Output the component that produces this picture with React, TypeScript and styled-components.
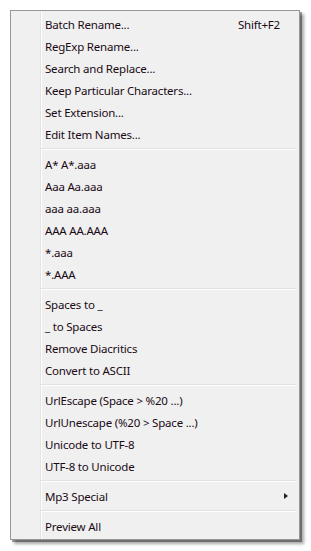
import React from "react";
import styled, { createGlobalStyle } from "styled-components";

const Global = createGlobalStyle`
  html, body { margin: 0; padding: 0; background: #ffffff; }
  body { font-family: "Noto Sans", "Open Sans", sans-serif; }
`;

const Page = styled.div`
  padding: 10px 0 0 10px;
  width: 311px;
  height: 551px;
  box-sizing: border-box;
`;

const Menu = styled.div`
  width: 290px;
  box-sizing: border-box;
  border: 1px solid #979797;
  padding: 2px;
  display: flex;
  flex-direction: column;
  background:
    linear-gradient(
      to right,
      transparent 29px,
      #e2e3e3 29px,
      #e2e3e3 30px,
      #ffffff 30px,
      #ffffff 31px,
      transparent 31px
    ),
    #f0f0f0;
  box-shadow: 2px 2px 0 rgba(0, 0, 0, 0.35), 4px 4px 3px rgba(0, 0, 0, 0.35);
`;

const Item = styled.div<{ $sub?: boolean }>`
  height: 22px;
  display: flex;
  align-items: center;
  padding: 0 ${(p) => (p.$sub ? "9px" : "17px")} 0 32px;
  font-size: 11.5px;
  letter-spacing: -0.2px;
  color: #1a0a14;
  white-space: nowrap;
`;

const Label = styled.span`
  flex: 1;
`;

const Shortcut = styled.span`
  color: #1a0a14;
`;

const Arrow = styled.span`
  width: 0;
  height: 0;
  border-top: 3.5px solid transparent;
  border-bottom: 3.5px solid transparent;
  border-left: 4px solid #222;
`;

const Separator = styled.div`
  height: 8px;
  margin: 0 0 0 28px;
  display: flex;
  flex-direction: column;
  justify-content: center;
  &::before {
    content: "";
    display: block;
    height: 1px;
    background: #e0e0e0;
  }
  &::after {
    content: "";
    display: block;
    height: 1px;
    background: #ffffff;
  }
`;

type Entry =
  | { label: string; shortcut?: string; sub?: boolean }
  | "sep";

const entries: Entry[] = [
  { label: "Batch Rename...", shortcut: "Shift+F2" },
  { label: "RegExp Rename..." },
  { label: "Search and Replace..." },
  { label: "Keep Particular Characters..." },
  { label: "Set Extension..." },
  { label: "Edit Item Names..." },
  "sep",
  { label: "A* A*.aaa" },
  { label: "Aaa Aa.aaa" },
  { label: "aaa aa.aaa" },
  { label: "AAA AA.AAA" },
  { label: "*.aaa" },
  { label: "*.AAA" },
  "sep",
  { label: "Spaces to _" },
  { label: "_ to Spaces" },
  { label: "Remove Diacritics" },
  { label: "Convert to ASCII" },
  "sep",
  { label: "UrlEscape (Space > %20 ...)" },
  { label: "UrlUnescape (%20 > Space ...)" },
  { label: "Unicode to UTF-8" },
  { label: "UTF-8 to Unicode" },
  "sep",
  { label: "Mp3 Special", sub: true },
  "sep",
  { label: "Preview All" },
];

export default function App() {
  return (
    <Page>
      <Global />
      <Menu>
        {entries.map((e, i) =>
          e === "sep" ? (
            <Separator key={i} />
          ) : (
            <Item key={i} $sub={e.sub}>
              <Label>{e.label}</Label>
              {e.shortcut && <Shortcut>{e.shortcut}</Shortcut>}
              {e.sub && <Arrow />}
            </Item>
          )
        )}
      </Menu>
    </Page>
  );
}
